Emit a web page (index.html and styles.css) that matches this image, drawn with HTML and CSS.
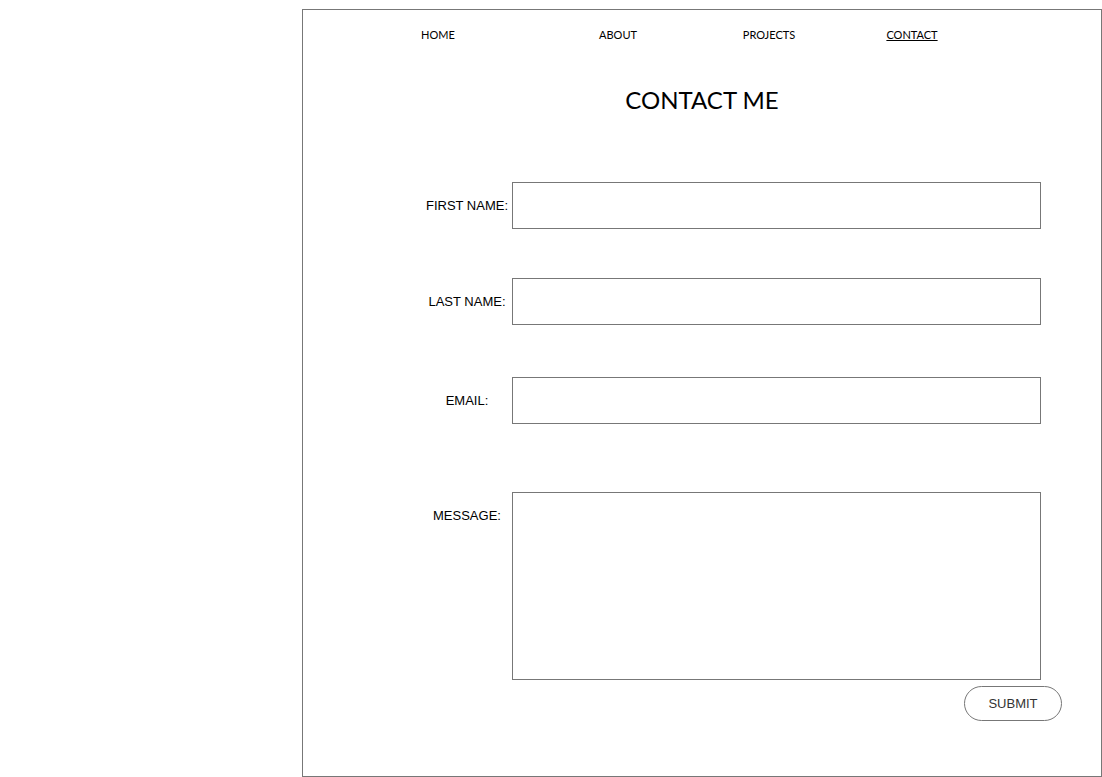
FILE: index.html
```html
<!DOCTYPE html>
<html lang="en">
<head>
    <meta charset="UTF-8">
    <meta name="viewport" content="width=device-width, initial-scale=1.0">
    <title>Contact Me</title>
    <link rel="stylesheet" href="styles.css">
</head>
<body>

<div class="page">
    <nav class="topnav">
        <a href="#">HOME</a>
        <a href="#">ABOUT</a>
        <a href="#">PROJECTS</a>
        <a href="#" class="current">CONTACT</a>
    </nav>

    <h1 class="title">CONTACT ME</h1>

    <form class="contact-form">
        <div class="row row-first">
            <label for="first">FIRST NAME:</label>
            <input id="first" type="text">
        </div>
        <div class="row row-last">
            <label for="last">LAST NAME:</label>
            <input id="last" type="text">
        </div>
        <div class="row row-email">
            <label for="email">EMAIL:</label>
            <input id="email" type="text">
        </div>
        <div class="row row-message">
            <label for="message">MESSAGE:</label>
            <textarea id="message"></textarea>
        </div>
        <div class="actions">
            <button type="button" class="submit">SUBMIT</button>
        </div>
    </form>
</div>

</body>
</html>
```

FILE: styles.css
```css
body{
    margin: 0;
    background: #fff;
}

/* the outlined page frame */
.page{
    box-sizing: border-box;
    width: 800px;
    height: 768px;
    margin: 9px 0 0 302px;
    border: 1px solid #777;
}

/* top links, each column centred on its word */
.topnav{
    display: grid;
    grid-template-columns: 180px 180px 122px 164px;
    padding: 17px 0 0 45px;
    font-family: Lato, "Open Sans", sans-serif;
    font-size: 11px;
    line-height: 15px;
}

.topnav a{
    text-align: center;
    color: #000;
    text-decoration: none;
}

.topnav a.current{
    text-decoration: underline;
}

.title{
    margin: 42px 0 0 0;
    text-align: center;
    font-family: Lato, "Open Sans", sans-serif;
    font-weight: normal;
    font-size: 24px;
    line-height: 32px;
    color: #000;
}

.contact-form{
    padding-left: 119px;
    font-family: "Liberation Sans", Arial, sans-serif;
    font-size: 13px;
}

.row{
    display: flex;
    align-items: flex-start;
}

.row-first{ margin-top: 66px; }
.row-last{ margin-top: 49px; }
.row-email{ margin-top: 52px; }
.row-message{ margin-top: 68px; }

.row label{
    width: 90px;
    text-align: center;
    line-height: 47px;
    color: #000;
}

.row input,
.row textarea{
    box-sizing: border-box;
    width: 529px;
    height: 47px;
    margin: 0;
    padding: 4px 8px;
    border: 1px solid #777;
    border-radius: 0;
    outline: none;
    background: #fff;
    resize: none;
}

.row textarea{
    height: 188px;
}

.actions{
    display: flex;
    justify-content: flex-end;
    padding: 6px 39px 0 0;
}

.submit{
    box-sizing: border-box;
    width: 98px;
    height: 35px;
    border: 1px solid #777;
    border-radius: 18px;
    background: #fff;
    font-family: "Liberation Sans", Arial, sans-serif;
    font-size: 13px;
    color: #333;
    cursor: pointer;
}
```
